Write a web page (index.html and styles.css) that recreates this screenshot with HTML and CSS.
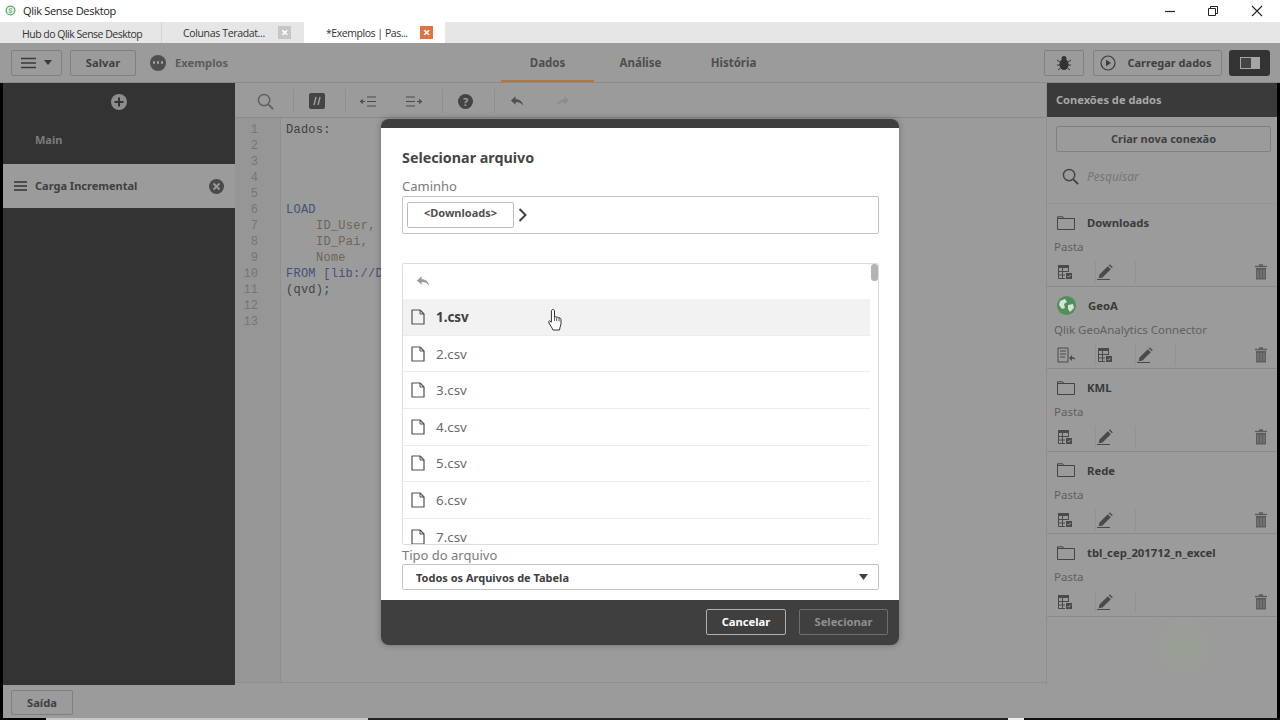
FILE: index.html
```html
<!DOCTYPE html>
<html lang="pt">
    <head>
        <meta charset="utf-8">
        <title>Qlik Sense Desktop</title>
        <link rel="stylesheet" href="styles.css">
    </head>
    <body>
        <!-- icones reutilizados -->
        <svg class="defs" width="0" height="0">
            <symbol id="i-folder" viewBox="0 0 18 14"><path d="M.5 13.500V.8h5.200l1 1.700h10.800v11z" fill="none" stroke="currentColor"/><path d="M.5 2.500h17" stroke="currentColor"/></symbol>
            <symbol id="i-table" viewBox="0 0 16 16"><path d="M1 1h11v3H1z" fill="currentColor"/><path d="M1.500 4v10.500H8M1.500 7.500H12M1.500 11H8M5.500 4v10.500M11.500 4v4" fill="none" stroke="currentColor"/><path d="M9 9h6v6H9z" fill="currentColor"/><path d="M10.500 12l1.200 1.200 2-2.400" fill="none" stroke="#9b9b9b"/></symbol>
            <symbol id="i-pencil" viewBox="0 0 16 16"><path d="M2.500 10.500L10.800 2.200l3 3-8.300 8.300-3.800.8z" fill="currentColor"/><path d="M11.800 1.200l1-1 3 3-1 1z" fill="currentColor"/><path d="M0 15.500h13" stroke="currentColor"/></symbol>
            <symbol id="i-trash" viewBox="0 0 12 16"><path d="M1 4h10v11.500H1z" fill="currentColor"/><path d="M0 2.500h12M4 1h4" stroke="currentColor" stroke-width="1.500"/><path d="M3 6v8M6 6v8M9 6v8" stroke="#9b9b9b" stroke-width=".6"/></symbol>
            <symbol id="i-file" viewBox="0 0 14 16"><path d="M1 1h8l4 4v10H1z" fill="none" stroke="currentColor" stroke-width="1.200" stroke-linejoin="round"/><path d="M9 1v4h4" fill="none" stroke="currentColor"/></symbol>
            <symbol id="i-back" viewBox="0 0 16 12"><path d="M6 1L1 5.500 6 10V7c3.500 0 6 .8 8 4-.5-4.500-3.500-7-8-7z" fill="currentColor"/></symbol>
            <symbol id="i-search" viewBox="0 0 18 18"><circle cx="7.500" cy="7.500" r="6" fill="none" stroke="currentColor" stroke-width="1.500"/><path d="M12 12l5 5" stroke="currentColor" stroke-width="2"/></symbol>
        </svg>

        <div class="app">
            <div class="titlebar">
                <svg class="qlik" width="11" height="11" viewBox="0 0 12 12"><circle cx="6" cy="6" r="4.800" fill="#e6f2e6" stroke="#5aa866" stroke-width="1.300"/><path d="M7.800 4.500C6.500 3.500 4.500 4 4.600 5.200c.1 1.300 3 .7 3 2 0 1.100-2 1.400-3.400.6" fill="none" stroke="#5aa866"/></svg>
                <span class="title-text">Qlik Sense Desktop</span>
                <div class="winbtns">
                    <svg width="10" height="12" viewBox="0 0 10 12"><path d="M0 6.500h10" stroke="#222" stroke-width="1.200"/></svg>
                    <svg width="12" height="12" viewBox="0 0 12 12"><path d="M1.500 3.500h7v7h-7zM3.500 3.500v-2h7v7h-2" fill="none" stroke="#222"/></svg>
                    <svg width="12" height="12" viewBox="0 0 12 12"><path d="M1 1l10 10M11 1L1 11" stroke="#222" stroke-width="1.100"/></svg>
                </div>
            </div>

            <div class="tabs">
                <div class="tab tab-hub">Hub do Qlik Sense Desktop</div>
                <div class="tab tab-col">Colunas Teradat...<span class="tab-x">×</span></div>
                <div class="tab tab-on">*Exemplos | Pas...<span class="tab-x x-orange">×</span></div>
            </div>

            <div class="toolbar">
                <div class="tool-left">
                    <div class="btn btn-menu">
                        <svg width="15" height="12" viewBox="0 0 15 12"><path d="M0 1.500h15M0 6h15M0 10.500h15" stroke="#3a3a3a" stroke-width="1.600"/></svg>
                        <svg width="8" height="5" viewBox="0 0 8 5"><path d="M0 0h8L4 5z" fill="#3a3a3a"/></svg>
                    </div>
                    <div class="btn btn-save">Salvar</div>
                    <div class="app-dots"><i></i><i></i><i></i></div>
                    <span class="app-name">Exemplos</span>
                </div>
                <div class="tool-mid">
                    <div class="mid-tab mid-on">Dados</div>
                    <div class="mid-tab">Análise</div>
                    <div class="mid-tab">História</div>
                </div>
                <div class="tool-right">
                    <div class="btn btn-bug">
                        <svg width="14" height="16" viewBox="0 0 14 16"><ellipse cx="7" cy="9.500" rx="4.500" ry="5.500" fill="#333"/><circle cx="7" cy="3.500" r="2.500" fill="#333"/><path d="M0 5l3 2M14 5l-3 2M0 10h3M14 10h-3M1 15l2.500-2M13 15l-2.500-2" stroke="#333"/></svg>
                    </div>
                    <div class="btn btn-load">
                        <svg width="16" height="16" viewBox="0 0 16 16"><circle cx="8" cy="8" r="7" fill="none" stroke="#3a3a3a" stroke-width="1.200"/><path d="M6 4.800L11 8l-5 3.200z" fill="#3a3a3a"/></svg>
                        Carregar dados
                    </div>
                    <div class="btn-toggle"><span></span></div>
                </div>
            </div>

            <div class="main">
                <aside class="side">
                    <div class="side-add">
                        <svg width="16" height="16" viewBox="0 0 16 16"><circle cx="8" cy="8" r="8" fill="#8d8d8d"/><path d="M8 3.500v9M3.500 8h9" stroke="#333" stroke-width="2"/></svg>
                    </div>
                    <div class="side-row side-main">Main</div>
                    <div class="side-row side-on">
                        <svg width="13" height="10" viewBox="0 0 13 10"><path d="M0 1h13M0 5h13M0 9h13" stroke="#333" stroke-width="1.500"/></svg>
                        <span class="side-name">Carga Incremental</span>
                        <svg width="15" height="15" viewBox="0 0 15 15"><circle cx="7.500" cy="7.500" r="7.500" fill="#4a4a4a"/><path d="M4.500 4.500l6 6M10.500 4.500l-6 6" stroke="#9b9b9b" stroke-width="1.800"/></svg>
                    </div>
                </aside>

                <section class="editor">
                    <div class="ed-tools">
                        <div class="ed-btn"><svg class="ic-dim" width="17" height="17"><use href="#i-search"/></svg></div>
                        <div class="ed-btn sep"><svg width="16" height="16" viewBox="0 0 16 16"><rect width="16" height="16" rx="2" fill="#444"/><path d="M7 4l-2 8M11 4l-2 8" stroke="#9b9b9b" stroke-width="1.500"/></svg></div>
                        <div class="ed-btn sep"><svg width="16" height="11" viewBox="0 0 16 11"><path d="M7 1h9M7 5.500h9M7 10h9M0 5.500h5M3 3.500l-2.500 2 2.500 2" fill="none" stroke="#4a4a4a" stroke-width="1.200"/></svg></div>
                        <div class="ed-btn"><svg width="16" height="11" viewBox="0 0 16 11"><path d="M0 1h9M0 5.500h9M0 10h9M11 5.500h5M13 3.500l2.500 2-2.500 2" fill="none" stroke="#4a4a4a" stroke-width="1.200"/></svg></div>
                        <div class="ed-btn sep"><svg width="15" height="15" viewBox="0 0 15 15"><circle cx="7.500" cy="7.500" r="7.500" fill="#444"/><text x="7.500" y="11.500" text-anchor="middle" class="q-mark">?</text></svg></div>
                        <div class="ed-btn sep"><svg class="ic-back" width="15" height="12"><use href="#i-back"/></svg></div>
                        <div class="ed-btn"><svg class="ic-redo" width="15" height="12"><use href="#i-back"/></svg></div>
                    </div>
                    <div class="ed-body">
                        <div class="gutter">1<br>2<br>3<br>4<br>5<br>6<br>7<br>8<br>9<br>10<br>11<br>12<br>13</div>
                        <div class="code">
                            <div class="ln c-lbl">Dados:</div>
                            <div class="ln"></div>
                            <div class="ln"></div>
                            <div class="ln"></div>
                            <div class="ln"></div>
                            <div class="ln c-kw">LOAD</div>
                            <div class="ln ind c-fld">ID_User,</div>
                            <div class="ln ind c-fld">ID_Pai,</div>
                            <div class="ln ind c-fld">Nome</div>
                            <div class="ln c-kw">FROM [lib://D</div>
                            <div class="ln">(qvd);</div>
                        </div>
                    </div>
                </section>

                <aside class="conn">
                    <div class="conn-head">Conexões de dados</div>
                    <div class="conn-new">Criar nova conexão</div>
                    <div class="conn-search">
                        <svg width="17" height="17"><use href="#i-search"/></svg>
                        <span>Pesquisar</span>
                    </div>
                    <div class="conn-item">
                        <div class="ci-top"><svg width="18" height="14"><use href="#i-folder"/></svg><b>Downloads</b></div>
                        <div class="ci-sub">Pasta</div>
                        <div class="ci-acts">
                            <span class="act"><svg width="16" height="16"><use href="#i-table"/></svg></span>
                            <span class="act"><svg width="16" height="16"><use href="#i-pencil"/></svg></span>
                            <span class="act-del"><svg width="12" height="16"><use href="#i-trash"/></svg></span>
                        </div>
                    </div>
                    <div class="conn-item">
                        <div class="ci-top">
                            <svg width="19" height="19" viewBox="0 0 19 19"><circle cx="9.500" cy="9.500" r="9.500" fill="#4f8f58"/><path d="M3 5l5-2 2 3-3 2 1 4-3 1-3-4zM11 9l5-1 1 4-4 4-2-3z" fill="#d7e3d5"/></svg>
                            <b>GeoA</b>
                        </div>
                        <div class="ci-sub">Qlik GeoAnalytics Connector</div>
                        <div class="ci-acts">
                            <span class="act"><svg width="19" height="16" viewBox="0 0 19 16"><path d="M1 1h10v14H1zM3 4h6M3 7h6M3 10h5" fill="none" stroke="currentColor"/><path d="M12 11l3-3v2c2 0 3 1 3.500 3-1-1-2-1.200-3.500-1.200V14z" fill="currentColor"/></svg></span>
                            <span class="act"><svg width="16" height="16"><use href="#i-table"/></svg></span>
                            <span class="act"><svg width="16" height="16"><use href="#i-pencil"/></svg></span>
                            <span class="act-del"><svg width="12" height="16"><use href="#i-trash"/></svg></span>
                        </div>
                    </div>
                    <div class="conn-item">
                        <div class="ci-top"><svg width="18" height="14"><use href="#i-folder"/></svg><b>KML</b></div>
                        <div class="ci-sub">Pasta</div>
                        <div class="ci-acts">
                            <span class="act"><svg width="16" height="16"><use href="#i-table"/></svg></span>
                            <span class="act"><svg width="16" height="16"><use href="#i-pencil"/></svg></span>
                            <span class="act-del"><svg width="12" height="16"><use href="#i-trash"/></svg></span>
                        </div>
                    </div>
                    <div class="conn-item">
                        <div class="ci-top"><svg width="18" height="14"><use href="#i-folder"/></svg><b>Rede</b></div>
                        <div class="ci-sub">Pasta</div>
                        <div class="ci-acts">
                            <span class="act"><svg width="16" height="16"><use href="#i-table"/></svg></span>
                            <span class="act"><svg width="16" height="16"><use href="#i-pencil"/></svg></span>
                            <span class="act-del"><svg width="12" height="16"><use href="#i-trash"/></svg></span>
                        </div>
                    </div>
                    <div class="conn-item">
                        <div class="ci-top"><svg width="18" height="14"><use href="#i-folder"/></svg><b>tbl_cep_201712_n_excel</b></div>
                        <div class="ci-sub">Pasta</div>
                        <div class="ci-acts">
                            <span class="act"><svg width="16" height="16"><use href="#i-table"/></svg></span>
                            <span class="act"><svg width="16" height="16"><use href="#i-pencil"/></svg></span>
                            <span class="act-del"><svg width="12" height="16"><use href="#i-trash"/></svg></span>
                        </div>
                    </div>
                </aside>
            </div>

            <div class="bottom">
                <div class="btn btn-out">Saída</div>
            </div>
            <div class="strip"><i class="s-k1"></i><i class="s-w1"></i><i class="s-k2"></i><i class="s-w2"></i><i class="s-k3"></i></div>
        </div>

        <!-- janela de dialogo por cima de tudo -->
        <div class="dialog">
            <div class="dlg-body">
                <h2 class="dlg-title">Selecionar arquivo</h2>
                <div class="dlg-label">Caminho</div>
                <div class="path-box">
                    <div class="path-btn">&lt;Downloads&gt;</div>
                    <svg width="9" height="14" viewBox="0 0 9 14"><path d="M1.500 1l6 6-6 6" fill="none" stroke="#404040" stroke-width="2"/></svg>
                </div>
                <div class="list">
                    <div class="list-back"><svg width="15" height="12"><use href="#i-back"/></svg></div>
                    <div class="row row-on"><svg width="14" height="16"><use href="#i-file"/></svg>1.csv</div>
                    <div class="row"><svg width="14" height="16"><use href="#i-file"/></svg>2.csv</div>
                    <div class="row"><svg width="14" height="16"><use href="#i-file"/></svg>3.csv</div>
                    <div class="row"><svg width="14" height="16"><use href="#i-file"/></svg>4.csv</div>
                    <div class="row"><svg width="14" height="16"><use href="#i-file"/></svg>5.csv</div>
                    <div class="row"><svg width="14" height="16"><use href="#i-file"/></svg>6.csv</div>
                    <div class="row"><svg width="14" height="16"><use href="#i-file"/></svg>7.csv</div>
                    <div class="thumb"></div>
                </div>
                <div class="dlg-label label-type">Tipo do arquivo</div>
                <div class="select">
                    <span>Todos os Arquivos de Tabela</span>
                    <svg width="9" height="6" viewBox="0 0 9 6"><path d="M0 0h9L4.500 6z" fill="#404040"/></svg>
                </div>
            </div>
            <div class="dlg-foot">
                <div class="foot-btn foot-cancel">Cancelar</div>
                <div class="foot-btn foot-sel">Selecionar</div>
            </div>
        </div>

        <!-- cursor -->
        <svg class="cursor" width="15" height="23" viewBox="0 0 15 23"><path d="M5 1.500c1 0 1.500.7 1.500 1.500v6l1-.3 1 .3 1 .2 1 .4 1.500.5 1 1.400v4.500l-1 3.500-.5 2.500H5l-1-2-3-5-.3-1.500 1-.7 1.700 1.300V3c0-.8.600-1.500 1.600-1.500z" fill="#fff" stroke="#333" stroke-width="1"/><path d="M6.500 9v4M8.700 9.200v4M11 9.700v3.800" stroke="#333" stroke-width=".8"/></svg>
    </body>
</html>
```

FILE: styles.css
```css
* {
    box-sizing: border-box;
}
html, body {
    margin: 0;
    height: 100%;
    overflow: hidden;
}
body {
    background: #000;
    font-family: "Noto Sans", "Open Sans", sans-serif;
    color: #333;
}
.defs {
    position: absolute;
}
.app {
    height: 720px;
    display: flex;
    flex-direction: column;
}

/* barra de titulo */
.titlebar {
    height: 22px;
    background: #fff;
    display: flex;
    align-items: center;
    padding: 0 0 1px 5px;
    font-family: "Open Sans", sans-serif;
    font-size: 11px;
    letter-spacing: -.3px;
    color: #222;
}
.title-text {
    margin-left: 7px;
}
.winbtns {
    margin-left: auto;
    display: flex;
    gap: 32px;
    padding-right: 17px;
}

/* abas */
.tabs {
    height: 21px;
    background: #e6e6e6;
    display: flex;
    font-family: "Open Sans", sans-serif;
    font-size: 10.500px;
    letter-spacing: -.35px;
    color: #333;
}
.tab {
    display: flex;
    align-items: center;
    padding-top: 2px;
}
.tab-hub {
    width: 162px;
    padding-left: 22px;
    border-right: 1px solid #d4d4d4;
    letter-spacing: -.5px;
}
.tab-col {
    width: 142px;
    padding: 0 13px 0 21px;
}
.tab-on {
    width: 141px;
    padding: 0 12px 0 22px;
    background: #fff;
    letter-spacing: -.45px;
}
.tab-col, .tab-on {
    justify-content: space-between;
}
.tab-x {
    width: 13px;
    height: 13px;
    background: #c6c6c6;
    color: #fff;
    font-size: 13px;
    font-weight: 700;
    line-height: 12px;
    text-align: center;
}
.x-orange {
    background: #e2713f;
}

/* barra principal */
.toolbar {
    height: 40px;
    background: #9b9b9b;
    border-bottom: 1px solid #8a8a8a;
    display: grid;
    grid-template-columns: 1fr auto 1fr;
    align-items: center;
    padding: 0 10px 0 11px;
}
.tool-left, .tool-right {
    display: flex;
    align-items: center;
}
.tool-right {
    justify-content: flex-end;
}
.btn {
    height: 26px;
    border: 1px solid #808080;
    border-radius: 2px;
    display: flex;
    align-items: center;
    justify-content: center;
    font-size: 11.200px;
    font-weight: 700;
    color: #404040;
}
.btn-menu {
    width: 51px;
    gap: 8px;
}
.btn-save {
    width: 66px;
    margin-left: 8px;
}
.app-dots {
    width: 16px;
    height: 16px;
    border-radius: 50%;
    background: #4f4f4f;
    margin-left: 14px;
    display: flex;
    align-items: center;
    justify-content: center;
    gap: 1.500px;
}
.app-dots i {
    width: 2.500px;
    height: 2.500px;
    background: #a5a5a5;
    border-radius: 50%;
}
.app-name {
    margin-left: 9px;
    font-size: 11.200px;
    font-weight: 700;
    color: #5c5c5c;
}
.tool-mid {
    display: flex;
    align-self: stretch;
}
.mid-tab {
    width: 93px;
    display: flex;
    align-items: center;
    justify-content: center;
    font-size: 11.500px;
    font-weight: 700;
    color: #4e4e4e;
    border-bottom: 2px solid transparent;
    padding-top: 1px;
}
.mid-on {
    border-bottom-color: #a87a4a;
}
.btn-bug {
    width: 40px;
}
.btn-load {
    width: 129px;
    margin-left: 9px;
    gap: 11px;
    padding-right: 3px;
    font-size: 11px;
}
.btn-toggle {
    width: 41px;
    height: 26px;
    margin-left: 7px;
    background: #333;
    border-radius: 3px;
    display: flex;
    align-items: center;
    justify-content: center;
}
.btn-toggle span {
    width: 20px;
    height: 12px;
    background: linear-gradient(90deg, #444 0 55%, #a5a5a5 55%);
    border: 1px solid #a5a5a5;
}

/* meio */
.main {
    flex: 1;
    min-height: 0;
    display: flex;
    padding: 0 3px;
}
.side {
    width: 232px;
    background: #333;
    color: #7c7c7c;
}
.side-add {
    height: 37px;
    display: flex;
    align-items: center;
    justify-content: center;
}
.side-row {
    height: 44px;
    display: flex;
    align-items: center;
    padding-left: 32px;
    font-size: 11px;
    font-weight: 700;
}
.side-main {
    padding-bottom: 6px;
}
.side-on {
    background: #9b9b9b;
    color: #404040;
    padding: 0 11px;
}
.side-name {
    flex: 1;
    margin-left: 8px;
    padding-bottom: 2px;
}

/* editor */
.editor {
    flex: 1;
    min-width: 0;
    background: #9b9b9b;
    display: flex;
    flex-direction: column;
}
.ed-tools {
    height: 35px;
    flex: none;
    border-bottom: 1px solid #8a8a8a;
    display: flex;
    align-items: center;
    padding: 2px 0 0 7px;
}
.ed-btn {
    width: 46px;
    height: 24px;
    display: flex;
    align-items: center;
    justify-content: center;
    color: #4a4a4a;
}
.sep {
    border-left: 1px solid #8f8f8f;
    margin-left: 5.400px;
}
.ic-dim {
    color: #5f5f5f;
}
.ic-back {
    color: #4f4f4f;
}
.ic-redo {
    color: #8c8c8c;
    transform: scaleX(-1);
}
.q-mark {
    fill: #9b9b9b;
    font-family: "Noto Sans", sans-serif;
    font-size: 11px;
    font-weight: 700;
}
.ed-body {
    flex: 1;
    margin-bottom: 2px;
    border-bottom: 1px solid #8f8f8f;
    display: flex;
    font-family: "Liberation Mono", monospace;
    font-size: 12px;
    line-height: 16px;
}
.gutter {
    width: 46px;
    flex: none;
    padding: 4px 22px 0 0;
    border-right: 1px solid #8f8f8f;
    text-align: right;
    color: #757575;
    background: #969696;
}
.code {
    padding: 4px 0 0 5px;
    letter-spacing: .25px;
    color: #444;
}
.ln {
    height: 16px;
    white-space: pre;
}
.ind {
    padding-left: 30px;
}
.c-lbl {
    color: #3f3f3f;
}
.c-kw {
    color: #47507c;
}
.c-fld {
    color: #6e6559;
}

/* conexoes */
.conn {
    width: 231px;
    background: #9b9b9b;
    border-left: 1px solid #8f8f8f;
    display: flex;
    flex-direction: column;
    background-image: radial-gradient(circle at 137px 565px, #98a094 0, #9b9b9b 40px);
}
.conn-head {
    height: 34px;
    flex: none;
    background: #3a3a3a;
    color: #a8a8a8;
    font-size: 11.100px;
    font-weight: 700;
    display: flex;
    align-items: center;
    padding: 0 0 1px 9px;
}
.conn-new {
    height: 26px;
    flex: none;
    margin: 9px 6px 0 9px;
    border: 1px solid #808080;
    border-radius: 2px;
    display: flex;
    align-items: center;
    justify-content: center;
    padding-bottom: 1px;
    font-size: 11px;
    font-weight: 700;
    color: #404040;
}
.conn-search {
    height: 46px;
    flex: none;
    padding: 0 0 9px 15px;
    margin-top: 6px;
    display: flex;
    align-items: center;
    gap: 8px;
    color: #444;
    border-bottom: 1px solid #959595;
}
.conn-search span {
    font-size: 12px;
    font-style: italic;
    color: #767676;
}
.conn-item {
    height: 82.500px;
    flex: none;
    padding: 9px 0 0 9px;
    border-bottom: 1px solid #8a8a8a;
    color: #444;
    font-size: 11.500px;
}
.ci-top {
    height: 19px;
    display: flex;
    align-items: center;
    gap: 12px;
    padding-left: 1px;
}
.ci-top b {
    font-size: 11.300px;
    color: #3a3a3a;
}
.ci-sub {
    margin: 6px 0 0 -2px;
    height: 18px;
    line-height: 18px;
    color: #606060;
}
.ci-acts {
    margin-top: 5px;
    display: flex;
    align-items: center;
    height: 22px;
    color: #4a4a4a;
}
.act {
    width: 40px;
    height: 22px;
    display: flex;
    align-items: center;
    padding-left: 1px;
    border-right: 1px solid #929292;
}
.act-del {
    margin-left: auto;
    padding-right: 10px;
    display: flex;
    color: #5e5e5e;
}

/* rodape */
.bottom {
    height: 33px;
    margin: 0 3px;
    background: #9b9b9b;
    display: flex;
    align-items: center;
    padding: 2px 0 0 8px;
}
.btn-out {
    width: 62px;
    height: 25px;
}
.strip {
    height: 2px;
    display: flex;
}
.strip i {
    display: block;
    height: 2px;
}
.s-k1 {
    width: 46px;
    background: #000;
}
.s-w1 {
    width: 322px;
    background: #c8c8c8;
}
.s-k2 {
    width: 640px;
    background: #222;
}
.s-w2 {
    width: 16px;
    background: #eee;
}
.s-k3 {
    flex: 1;
    background: #111;
}

/* dialogo */
.dialog {
    position: absolute;
    left: 381px;
    top: 119px;
    width: 518px;
    height: 526px;
    padding-top: 9px;
    background: #3f3f3f;
    border-radius: 8px;
    box-shadow: 0 0 6px rgba(0, 0, 0, .3);
    display: flex;
    flex-direction: column;
}
.dlg-body {
    height: 472px;
    flex: none;
    background: #fff;
    padding: 20px 20px 0 21px;
}
.dlg-title {
    margin: 0;
    font-size: 14.300px;
    line-height: 20px;
    font-weight: 700;
    color: #454545;
}
.dlg-label {
    margin-top: 9px;
    font-size: 13px;
    line-height: 18px;
    color: #7b7b7b;
}
.path-box {
    height: 38px;
    margin-top: 1px;
    border: 1px solid #c4c4c4;
    border-radius: 2px;
    display: flex;
    align-items: flex-start;
    padding: 5px 0 0 4px;
    gap: 4px;
}
.path-box svg {
    margin-top: 6px;
}
.path-btn {
    width: 107px;
    height: 26px;
    border: 1px solid #bdbdbd;
    border-radius: 2px;
    display: flex;
    align-items: center;
    justify-content: center;
    padding-bottom: 5px;
    font-size: 11px;
    font-weight: 700;
    color: #505050;
}
.list {
    position: relative;
    height: 282px;
    margin-top: 29px;
    border: 1px solid #dcdcdc;
    border-radius: 2px;
    overflow: hidden;
}
.list-back {
    height: 35.300px;
    padding: 6px 0 0 13px;
    color: #9a9a9a;
}
.row {
    height: 36.600px;
    margin-right: 8px;
    padding-left: 8px;
    display: flex;
    align-items: center;
    gap: 11px;
    border-bottom: 1px solid #ececec;
    font-size: 13.400px;
    color: #6b6b6b;
}
.row svg {
    color: #505050;
    flex: none;
}
.row-on {
    background: #f2f2f2;
    font-weight: 700;
    color: #404040;
}
.thumb {
    position: absolute;
    right: 0;
    top: 0;
    width: 7px;
    height: 17px;
    border-radius: 3px;
    background: #b4b4b4;
}
.label-type {
    margin-top: 1px;
    font-size: 13px;
    line-height: 18px;
}
.select {
    height: 26px;
    border: 1px solid #c4c4c4;
    border-radius: 2px;
    display: flex;
    align-items: center;
    justify-content: space-between;
    padding: 0 10px 0 13px;
    font-size: 11px;
    font-weight: 700;
    color: #404040;
}
.dlg-foot {
    flex: 1;
    display: flex;
    align-items: center;
    justify-content: flex-end;
    gap: 13px;
    padding: 0 11px 1px 0;
}
.foot-btn {
    height: 26px;
    border: 1px solid #8a8a8a;
    border-radius: 2px;
    display: flex;
    align-items: center;
    justify-content: center;
    padding-bottom: 2px;
    font-size: 11.200px;
    font-weight: 700;
}
.foot-cancel {
    width: 80px;
    color: #fff;
    border-color: #b0b0b0;
}
.foot-sel {
    width: 89px;
    color: #8f8f8f;
    border-color: #6f6f6f;
}
.cursor {
    position: absolute;
    left: 548px;
    top: 308px;
}
```
